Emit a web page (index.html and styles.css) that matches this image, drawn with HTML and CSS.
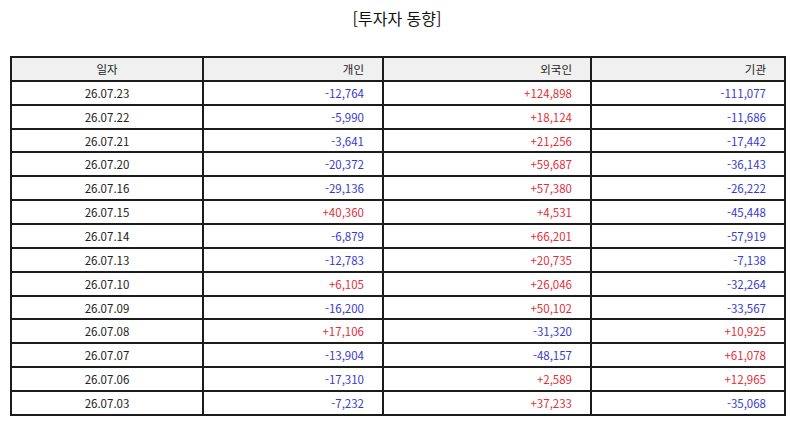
FILE: index.html
```html
<!DOCTYPE html>
<html lang="ko">
<head>
<meta charset="utf-8">
<link rel="stylesheet" href="styles.css">
</head>
<body>
<h1 class="title">[투자자 동향]</h1>
<table class="grid">
  <colgroup>
    <col class="c-date"><col class="c-ind"><col class="c-for"><col class="c-inst">
  </colgroup>
  <thead>
    <tr><th class="center">일자</th><th>개인</th><th>외국인</th><th>기관</th></tr>
  </thead>
  <tbody>
    <tr><td class="center">26.07.23</td><td class="neg">-12,764</td><td class="pos">+124,898</td><td class="neg">-111,077</td></tr>
    <tr><td class="center">26.07.22</td><td class="neg">-5,990</td><td class="pos">+18,124</td><td class="neg">-11,686</td></tr>
    <tr><td class="center">26.07.21</td><td class="neg">-3,641</td><td class="pos">+21,256</td><td class="neg">-17,442</td></tr>
    <tr><td class="center">26.07.20</td><td class="neg">-20,372</td><td class="pos">+59,687</td><td class="neg">-36,143</td></tr>
    <tr><td class="center">26.07.16</td><td class="neg">-29,136</td><td class="pos">+57,380</td><td class="neg">-26,222</td></tr>
    <tr><td class="center">26.07.15</td><td class="pos">+40,360</td><td class="pos">+4,531</td><td class="neg">-45,448</td></tr>
    <tr><td class="center">26.07.14</td><td class="neg">-6,879</td><td class="pos">+66,201</td><td class="neg">-57,919</td></tr>
    <tr><td class="center">26.07.13</td><td class="neg">-12,783</td><td class="pos">+20,735</td><td class="neg">-7,138</td></tr>
    <tr><td class="center">26.07.10</td><td class="pos">+6,105</td><td class="pos">+26,046</td><td class="neg">-32,264</td></tr>
    <tr><td class="center">26.07.09</td><td class="neg">-16,200</td><td class="pos">+50,102</td><td class="neg">-33,567</td></tr>
    <tr><td class="center">26.07.08</td><td class="pos">+17,106</td><td class="neg">-31,320</td><td class="pos">+10,925</td></tr>
    <tr><td class="center">26.07.07</td><td class="neg">-13,904</td><td class="neg">-48,157</td><td class="pos">+61,078</td></tr>
    <tr><td class="center">26.07.06</td><td class="neg">-17,310</td><td class="pos">+2,589</td><td class="pos">+12,965</td></tr>
    <tr><td class="center">26.07.03</td><td class="neg">-7,232</td><td class="pos">+37,233</td><td class="neg">-35,068</td></tr>
  </tbody>
</table>
</body>
</html>
```
FILE: styles.css
```css
html, body {
  margin: 0;
  padding: 0;
  background: #ffffff;
}
body {
  font-family: "Noto Sans CJK KR", "Noto Sans", sans-serif;
  color: #222222;
  padding: 0 10px;
}
.title {
  margin: 0;
  padding-top: 6px;
  height: 56px;
  box-sizing: border-box;
  font-size: 16px;
  font-weight: normal;
  text-align: center;
  line-height: 24px;
  color: #111111;
}
.grid {
  width: 774px;
  border-collapse: collapse;
  table-layout: fixed;
  font-size: 11.5px;
}
.c-date { width: 192px; }
.c-ind { width: 180px; }
.c-for { width: 208px; }
.c-inst { width: 194px; }
.grid th, .grid td {
  border: 2px solid #1c1c1c;
  height: 23.87px;
  padding: 0 18px 0 4px;
  text-align: right;
  line-height: 14px;
  vertical-align: middle;
  box-sizing: border-box;
}
.grid th {
  background: #f0f0f0;
  font-weight: normal;
  color: #222222;
}
.grid .center {
  text-align: center;
  padding: 0 4px;
}
.neg { color: #3a3ad0; }
.pos { color: #e0303a; }
```
